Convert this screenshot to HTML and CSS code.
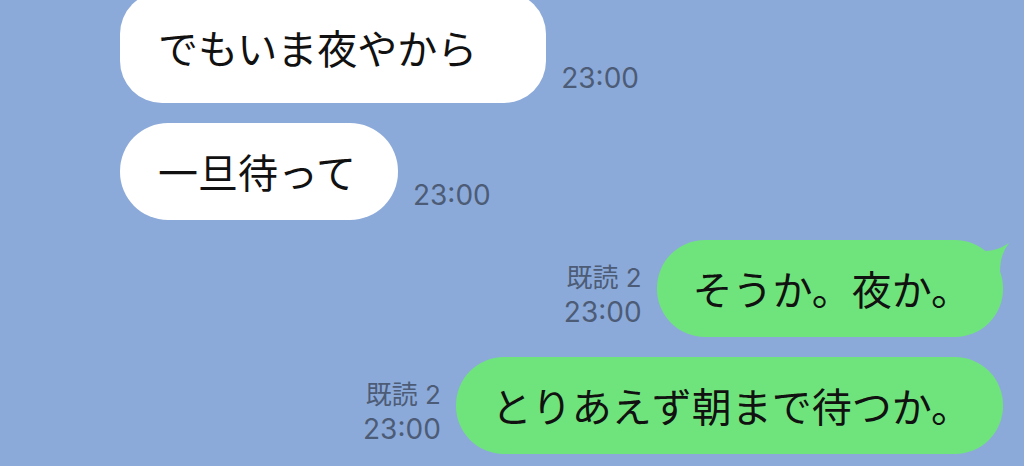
FILE: index.html
```html
<!DOCTYPE html>
<html lang="ja">
<head>
<meta charset="utf-8">
<title>Chat</title>
<link rel="stylesheet" href="styles.css">
</head>
<body>
<main class="chat">
  <div class="row row--in row--first">
    <div class="bubble bubble--in bubble--multi">でもいま夜やから</div>
    <div class="meta"><span class="time">23:00</span></div>
  </div>
  <div class="row row--in">
    <div class="bubble bubble--in">一旦待って</div>
    <div class="meta"><span class="time">23:00</span></div>
  </div>
  <div class="row row--out">
    <div class="meta meta--out"><span class="read">既読 2</span><span class="time">23:00</span></div>
    <div class="bubble bubble--out bubble--tail">そうか。夜か。<svg class="tail" width="50" height="45" viewBox="0 0 50 45" aria-hidden="true"><path d="M0 9 Q12 8 22 11 Q36 12 49 3 Q40 14 40 32 L0 40 Z"/></svg></div>
  </div>
  <div class="row row--out">
    <div class="meta meta--out"><span class="read">既読 2</span><span class="time">23:00</span></div>
    <div class="bubble bubble--out">とりあえず朝まで待つか。</div>
  </div>
</main>
</body>
</html>
```
FILE: styles.css
```css
html, body {
  margin: 0;
  padding: 0;
}
body {
  background: #8caad9;
  width: 1024px;
  height: 466px;
  overflow: hidden;
  font-family: "Noto Sans CJK JP", sans-serif;
}
.chat {
  display: flex;
  flex-direction: column;
  gap: 20px;
  padding: 0 21px 0 120px;
}
.row {
  display: flex;
  align-items: flex-end;
  gap: 15px;
}
.row--first {
  margin-top: -8px;
}
.row--out {
  justify-content: flex-end;
  gap: 15px;
}
.bubble {
  position: relative;
  font-family: "Noto Sans CJK JP", sans-serif;
  font-size: 40px;
  line-height: 57px;
  color: #111;
  padding: 20px 42px 20px 38px;
  border-radius: 48px;
  white-space: nowrap;
}
.bubble--in {
  background: #ffffff;
}
.bubble--multi {
  padding: 27px 69px 27px 38px;
  border-radius: 42px;
}
.bubble--out {
  background: #70e47c;
  padding: 20px 32px 20px 36px;
}
.tail {
  position: absolute;
  top: 0;
  right: -7px;
  fill: #70e47c;
}
.meta {
  display: flex;
  flex-direction: column;
  font-family: Inter, "Noto Sans CJK JP", sans-serif;
  font-size: 28px;
  line-height: 34px;
  color: #4d5c76;
  margin-bottom: 8px;
  white-space: nowrap;
}
.meta--out {
  align-items: flex-end;
}
.read {
  font-size: 26px;
}
```
